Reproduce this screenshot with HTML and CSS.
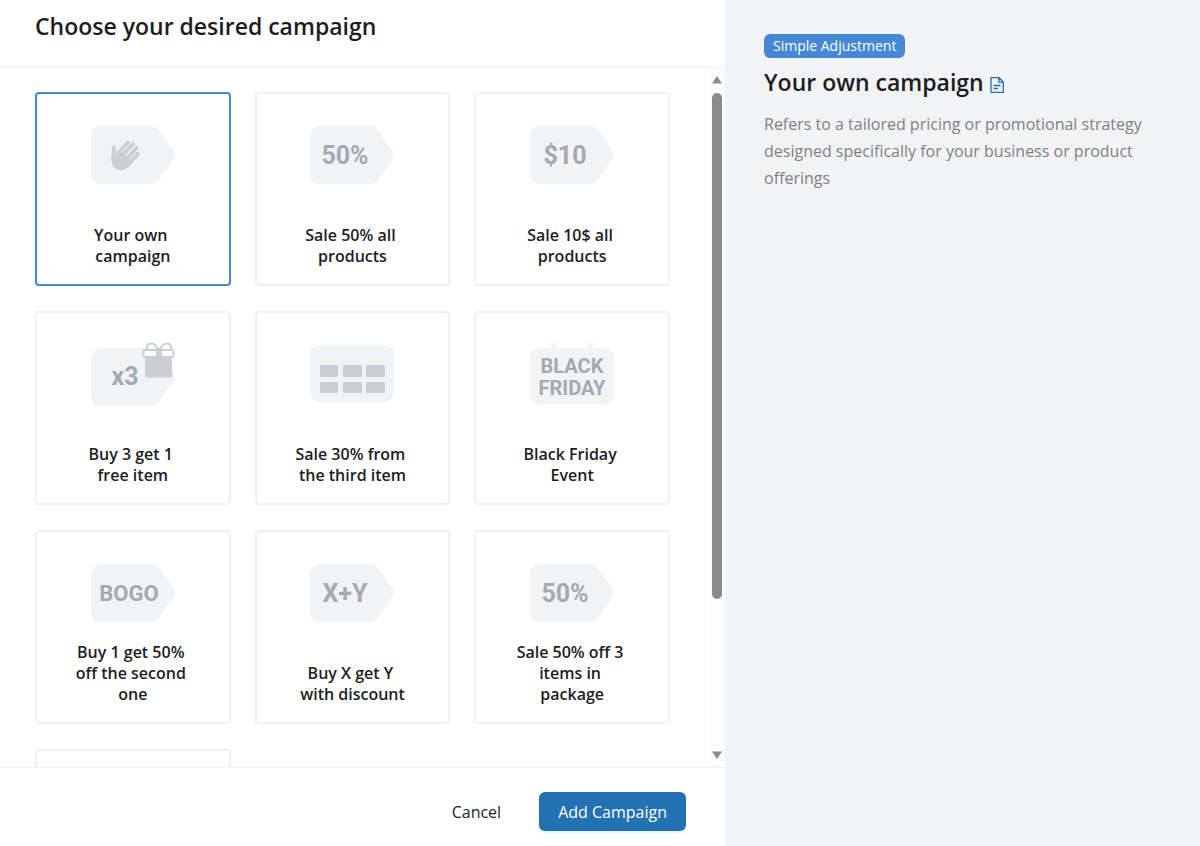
FILE: index.html
```html
<!DOCTYPE html>
<html lang="en">
<head>
    <meta charset="utf-8">
    <meta name="viewport" content="width=device-width, initial-scale=1">
    <title>Choose your desired campaign</title>
    <link rel="stylesheet" href="styles.css">
</head>
<body>
    <svg class="defs" aria-hidden="true">
        <symbol id="tag" viewBox="0 0 84 64">
            <path d="M9 3H60C63.500 3 66 4.500 68 7L82.500 28Q85 32 82.500 36L68 56.500C66 59.500 63.500 61 60 61H9A9 9 0 0 1 0 52V12A9 9 0 0 1 9 3Z"/>
        </symbol>
    </svg>

    <form class="modal">
        <section class="picker">
            <header class="picker-header">
                <h1>Choose your desired campaign</h1>
            </header>

            <div class="picker-body">
                <div class="campaigns">
                    <label class="campaign">
                        <input type="radio" name="campaign" value="own" checked>
                        <svg class="art" viewBox="0 0 84 64" aria-hidden="true">
                            <use href="#tag" width="84" height="64"/>
                            <path class="shape" d="M20.500 35L26 31L29 27L41 39L37.500 43.500Q34 47.300 30 47.300Q20.200 46.500 20.500 35Z"/>
                            <path class="finger" d="M23 24.500L22.300 36M37 19.500L27 30.500M42 20.800L31 33.500M45.300 25L34 38M46.800 30.800L36 43"/>
                        </svg>
                        <span class="campaign-title">Your own campaign</span>
                    </label>

                    <label class="campaign">
                        <input type="radio" name="campaign" value="sale-50">
                        <svg class="art" viewBox="0 0 84 64" aria-hidden="true">
                            <use href="#tag" width="84" height="64"/>
                            <text x="35" y="41">50%</text>
                        </svg>
                        <span class="campaign-title">Sale 50% all products</span>
                    </label>

                    <label class="campaign">
                        <input type="radio" name="campaign" value="sale-10">
                        <svg class="art" viewBox="0 0 84 64" aria-hidden="true">
                            <use href="#tag" width="84" height="64"/>
                            <text x="35" y="41">$10</text>
                        </svg>
                        <span class="campaign-title">Sale 10$ all products</span>
                    </label>

                    <label class="campaign">
                        <input type="radio" name="campaign" value="buy-3">
                        <svg class="art" viewBox="0 0 84 64" aria-hidden="true">
                            <use href="#tag" y="3" width="84" height="64"/>
                            <text x="34" y="43">x3</text>
                            <path class="shape" d="M54 15H81V33.500A2 2 0 0 1 79 35.500H56A2 2 0 0 1 54 33.500Z"/>
                            <rect class="lid" x="52.500" y="8" width="30" height="7" rx="1.500"/>
                            <rect class="shape" x="65" y="6" width="6" height="10"/>
                            <path class="bow" d="M67 7C65 3 62.500 1.500 60 1.500C57 1.500 55.500 4 56 7M69 7C71 3 73.500 1.500 76 1.500C79 1.500 80.500 4 80 7"/>
                        </svg>
                        <span class="campaign-title">Buy 3 get 1 free item</span>
                    </label>

                    <label class="campaign">
                        <input type="radio" name="campaign" value="sale-30">
                        <svg class="art" viewBox="0 0 84 64" aria-hidden="true">
                            <rect y="3" width="84" height="57" rx="9"/>
                            <g class="shape">
                                <rect x="10" y="23" width="18" height="12" rx="1"/>
                                <rect x="33" y="23" width="19" height="12" rx="1"/>
                                <rect x="56" y="23" width="19" height="12" rx="1"/>
                                <rect x="10" y="40" width="18" height="11" rx="1"/>
                                <rect x="33" y="40" width="19" height="11" rx="1"/>
                                <rect x="56" y="40" width="19" height="11" rx="1"/>
                            </g>
                        </svg>
                        <span class="campaign-title">Sale 30% from the third item</span>
                    </label>

                    <label class="campaign">
                        <input type="radio" name="campaign" value="black-friday">
                        <svg class="art" viewBox="0 0 84 64" aria-hidden="true">
                            <rect y="6" width="84" height="57" rx="9"/>
                            <rect x="21" width="5" height="12" rx="2.500"/>
                            <rect x="58" width="5" height="12" rx="2.500"/>
                            <text class="small" x="42" y="31">BLACK</text>
                            <text class="small" x="42" y="53">FRIDAY</text>
                        </svg>
                        <span class="campaign-title">Black Friday Event</span>
                    </label>

                    <label class="campaign">
                        <input type="radio" name="campaign" value="bogo">
                        <svg class="art" viewBox="0 0 84 64" aria-hidden="true">
                            <use href="#tag" width="84" height="64"/>
                            <text class="medium" x="38" y="40">BOGO</text>
                        </svg>
                        <span class="campaign-title">Buy 1 get 50% off the second one</span>
                    </label>

                    <label class="campaign">
                        <input type="radio" name="campaign" value="buy-x-get-y">
                        <svg class="art" viewBox="0 0 84 64" aria-hidden="true">
                            <use href="#tag" width="84" height="64"/>
                            <text x="35" y="41">X+Y</text>
                        </svg>
                        <span class="campaign-title">Buy X get Y with discount</span>
                    </label>

                    <label class="campaign">
                        <input type="radio" name="campaign" value="package">
                        <svg class="art" viewBox="0 0 84 64" aria-hidden="true">
                            <use href="#tag" width="84" height="64"/>
                            <text x="35" y="41">50%</text>
                        </svg>
                        <span class="campaign-title">Sale 50% off 3 items in package</span>
                    </label>

                    <div class="campaign"></div>
                </div>

                <div class="scrollbar" aria-hidden="true">
                    <svg class="arrow" viewBox="0 0 10 8"><path d="M5 0L10 7.500H0Z"/></svg>
                    <div class="track"><div class="thumb"></div></div>
                    <svg class="arrow" viewBox="0 0 10 8"><path d="M5 8L10 0.500H0Z"/></svg>
                </div>
            </div>

            <footer class="picker-footer">
                <button type="button" class="btn">Cancel</button>
                <button type="submit" class="btn btn-primary">Add Campaign</button>
            </footer>
        </section>

        <aside class="details">
            <span class="badge">Simple Adjustment</span>
            <h2>
                Your own campaign
                <a href="#docs" aria-label="Documentation">
                    <svg class="doc-icon" viewBox="0 0 14 16" aria-hidden="true">
                        <path d="M1 0.700H9L13.300 5V15.300H1ZM8.800 0.700V5.200H13.300M3.500 8.500H10.500M3.500 11.500H8"/>
                    </svg>
                </a>
            </h2>
            <p>Refers to a tailored pricing or promotional strategy designed specifically for your business or product offerings</p>
        </aside>
    </form>
</body>
</html>
```

FILE: styles.css
```css
* {
    box-sizing: border-box;
}

body {
    margin: 0;
    font-family: "Segoe UI", "Open Sans", "Noto Sans", sans-serif;
    font-size: 16px;
    color: #1d1d1f;
    background-color: #fff;
}

h1, h2, p {
    margin: 0;
}

h1, h2 {
    font-size: 23px;
    font-weight: 600;
    line-height: 32px;
}

.defs {
    display: none;
}

.modal {
    display: grid;
    grid-template-columns: 29fr 19fr;
    height: 100vh;
}

.picker {
    display: flex;
    flex-direction: column;
    min-height: 0;
}

.picker-header {
    padding: 10px 35px 25px;
    border-bottom: 1px solid #f0f0f1;
}

.picker-body {
    display: flex;
    flex: 1;
    min-height: 0;
}

/* campaign cards */
.campaigns {
    flex: 1;
    display: grid;
    grid-template-columns: repeat(3, 1fr);
    grid-auto-rows: 194px;
    gap: 25px 24px;
    padding: 24px 39px 24px 35px;
    overflow: hidden;
}

.campaign {
    position: relative;
    display: flex;
    flex-direction: column;
    align-items: center;
    justify-content: space-between;
    padding: 29px 36px 17px;
    border: 2px solid #f0f0f1;
    border-radius: 4px;
    cursor: pointer;
}

.campaign:has(:checked) {
    border-color: #4588d6;
}

.campaign input {
    position: absolute;
    opacity: 0;
}

.campaign-title {
    font-weight: 600;
    line-height: 21px;
    text-align: center;
    white-space: break-spaces;
}

.art {
    width: 84px;
    height: 64px;
    fill: #f2f3f5;
}

.art text {
    font-family: Roboto, sans-serif;
    font-size: 25px;
    font-weight: 700;
    text-anchor: middle;
    fill: #a2abb3;
}

.art .medium {
    font-size: 22px;
}

.art .small {
    font-size: 20px;
    line-height: 20px;
}

.art .shape {
    fill: #cbced4;
}

.art .finger {
    fill: none;
    stroke: #cbced4;
    stroke-width: 4;
    stroke-linecap: round;
}

.art .lid {
    fill: #fff;
    stroke: #cbced4;
    stroke-width: 2;
}

.art .bow {
    fill: none;
    stroke: #cbced4;
    stroke-width: 2;
}

/* scrollbar */
.scrollbar {
    display: flex;
    flex-direction: column;
    align-items: center;
    width: 16px;
    padding: 8px 0;
    background-color: #fcfcfc;
}

.arrow {
    width: 10px;
    height: 8px;
    fill: #8b8b8b;
}

.track {
    flex: 1;
    width: 10px;
    padding: 9px 0;
}

.thumb {
    height: 78%;
    border-radius: 5px;
    background-color: #8b8b8b;
}

.picker-footer {
    display: flex;
    justify-content: flex-end;
    gap: 19px;
    padding: 24px 39px 15px;
    border-top: 1px solid #f0f0f1;
}

.btn {
    padding: 1px 19px 0;
    border: 0;
    border-radius: 6px;
    font: inherit;
    line-height: 38px;
    color: inherit;
    background: none;
    cursor: pointer;
}

.btn-primary {
    color: #fff;
    background-color: #2271b1;
    box-shadow: 0 2px 0 #e6f4ff;
}

/* right side */
.details {
    padding: 34px 39px;
    background-color: #f2f3f5;
}

.badge {
    display: block;
    width: fit-content;
    padding: 0 9px;
    border-radius: 6px;
    font-size: 14px;
    line-height: 24px;
    color: #fff;
    background-color: #4588d6;
}

.details h2 {
    margin: 8px 0 13px;
}

.doc-icon {
    width: 14px;
    height: 16px;
    fill: none;
    stroke: #2271b1;
    stroke-width: 1.3;
    vertical-align: -2px;
}

.details p {
    line-height: 27px;
    color: #808184;
}
```
